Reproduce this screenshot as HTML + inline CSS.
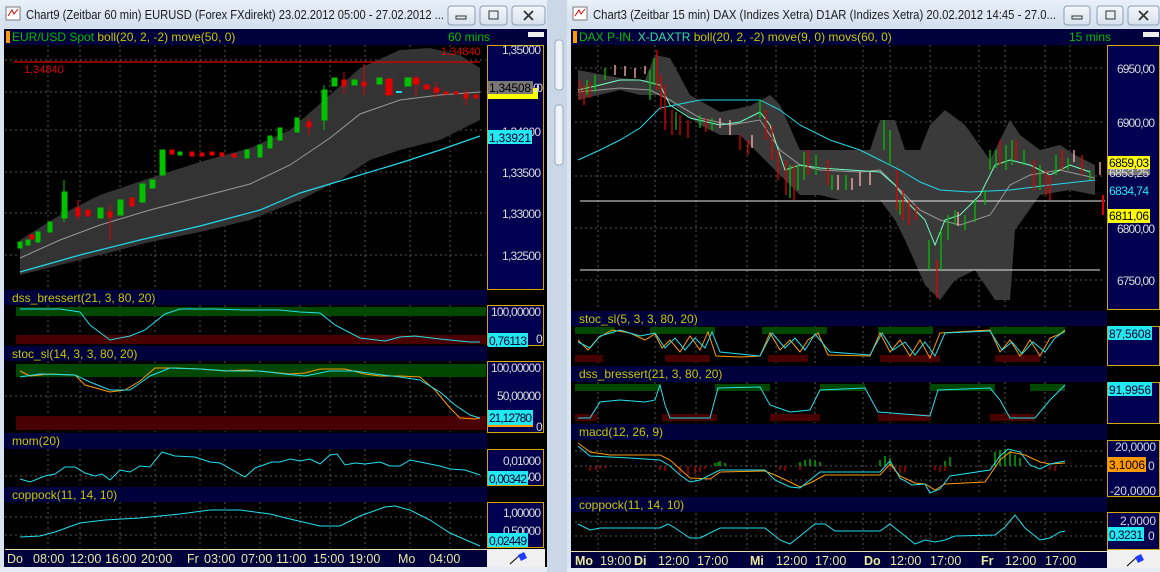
<!DOCTYPE html>
<html><head><meta charset="utf-8"><style>
html,body{margin:0;padding:0;background:#dfe8f2;width:1160px;height:572px;overflow:hidden}
svg{display:block;font-family:"Liberation Sans",sans-serif}
</style></head><body>
<svg width="1160" height="572" viewBox="0 0 1160 572" xmlns="http://www.w3.org/2000/svg">
<defs>
<linearGradient id="tb" x1="0" y1="0" x2="0" y2="1"><stop offset="0" stop-color="#e9f0f8"/><stop offset="1" stop-color="#d2dfee"/></linearGradient>
<linearGradient id="btn" x1="0" y1="0" x2="0" y2="1"><stop offset="0" stop-color="#f4f7fb"/><stop offset="1" stop-color="#d7e1ec"/></linearGradient>
</defs>
<rect x="0" y="0" width="1160" height="572" fill="#d9e4f0"/>
<rect x="547" y="0" width="20" height="572" fill="#c9d7e6"/>
<rect x="555" y="40" width="8" height="50" rx="3" fill="#eef3f8" stroke="#9aa9ba"/>
<rect x="555" y="105" width="8" height="60" rx="3" fill="#eef3f8" stroke="#9aa9ba"/>

<!-- ===== LEFT WINDOW ===== -->
<rect x="0" y="0" width="547" height="28" fill="url(#tb)"/>
<rect x="6" y="7" width="14" height="13" fill="#fff" stroke="#7a7a7a"/><path d="M8 16 L12 10 L14 14 L18 9" stroke="#d00" fill="none"/>
<text x="26" y="19" font-size="12.5" fill="#1c1c1c" textLength="418" lengthAdjust="spacingAndGlyphs">Chart9 (Zeitbar 60 min)  EURUSD (Forex FXdirekt) 23.02.2012 05:00 - 27.02.2012 ...</text>
<rect x="448" y="6" width="27" height="19" rx="3" fill="url(#btn)" stroke="#8c9db2"/><rect x="456" y="16" width="10" height="3" fill="none" stroke="#333"/>
<rect x="480" y="6" width="27" height="19" rx="3" fill="url(#btn)" stroke="#8c9db2"/><rect x="489" y="11" width="9" height="8" fill="none" stroke="#333"/>
<rect x="512" y="6" width="33" height="19" rx="3" fill="url(#btn)" stroke="#8c9db2"/><path d="M524 11 L533 20 M533 11 L524 20" stroke="#333" stroke-width="1.8"/>

<rect x="4" y="29" width="543" height="540" fill="#000"/>
<g fill="#00003c">
<rect x="4" y="29" width="543" height="16"/>
<rect x="4" y="290" width="483" height="15"/>
<rect x="4" y="346" width="483" height="15"/>
<rect x="4" y="433" width="483" height="16"/>
<rect x="4" y="487" width="483" height="15"/>
</g>
<rect x="6" y="31" width="4" height="12" fill="#ff9900"/>
<rect x="528" y="32" width="16" height="5" fill="#eee"/>
<text x="12" y="41" font-size="12" fill="#00c000">EUR/USD Spot <tspan fill="#c8c800">boll(20, 2, -2) move(50, 0)</tspan></text>
<text x="448" y="41" font-size="12" fill="#00c000">60 mins</text>
<g font-size="12" fill="#c8c800">
<text x="12" y="302">dss_bressert(21, 3, 80, 20)</text>
<text x="12" y="358">stoc_sl(14, 3, 3, 80, 20)</text>
<text x="12" y="445">mom(20)</text>
<text x="12" y="499">coppock(11, 14, 10)</text>
</g>
<g fill="#000050" stroke="#d4a800">
<rect x="487.5" y="45.5" width="56" height="244"/>
<rect x="487.5" y="305.5" width="56" height="40"/>
<rect x="487.5" y="361.5" width="56" height="71"/>
<rect x="487.5" y="449.5" width="56" height="36"/>
<rect x="487.5" y="502.5" width="56" height="45"/>
</g>
<g stroke="#555" stroke-dasharray="2,3">
<path d="M5 130H486M5 172H486M5 213H486M5 255H486M5 92H486M5 60H486"/>
<path d="M48 45V289M80 45V289M120 45V289M155 45V289M200 45V289M225 45V289M260 45V289M300 45V289M330 45V289M365 45V289M410 45V289M450 45V289"/>
<path d="M48 305V345M80 305V345M120 305V345M155 305V345M200 305V345M225 305V345M260 305V345M300 305V345M330 305V345M365 305V345M410 305V345M450 305V345"/>
<path d="M48 361V432M80 361V432M120 361V432M155 361V432M200 361V432M225 361V432M260 361V432M300 361V432M330 361V432M365 361V432M410 361V432M450 361V432M5 396H486"/>
<path d="M48 449V485M80 449V485M120 449V485M155 449V485M200 449V485M225 449V485M260 449V485M300 449V485M330 449V485M365 449V485M410 449V485M450 449V485M5 476H486"/>
<path d="M48 502V548M80 502V548M120 502V548M155 502V548M200 502V548M225 502V548M260 502V548M300 502V548M330 502V548M365 502V548M410 502V548M450 502V548M5 517H486M5 535H486"/>
</g>
<polygon fill="#333" points="20,240 60,215 100,195 150,178 200,162 250,148 290,130 330,95 360,68 400,50 430,48 460,55 480,68 480,120 440,140 400,150 370,160 340,180 300,200 250,220 200,232 150,242 100,255 60,265 20,275" />
<polyline fill="none" stroke="#999" points="20,258 60,240 100,225 150,210 200,197 250,184 290,165 330,138 360,114 400,100 440,95 480,92"/>
<polyline fill="none" stroke="#22d8e8" stroke-width="1.2" points="20,272 80,255 140,240 200,226 260,210 300,193 350,178 400,163 440,150 480,136"/>
<path d="M14 62H480" stroke="#e00000" stroke-width="1.3"/>
<text x="24" y="73" font-size="11" fill="#e00000">1,34840</text>
<text x="441" y="55" font-size="11" fill="#e00000">1,34840</text>
<g stroke-width="1">
<g fill="#00c000" stroke="#00c000">
<rect x="18" y="242" width="4" height="6"/><rect x="26" y="240" width="4" height="5"/><rect x="36" y="232" width="4" height="10"/><rect x="48" y="222" width="4" height="10"/>
<rect x="62" y="192" width="5" height="26"/><path d="M64 180V222"/><rect x="98" y="208" width="5" height="10"/><rect x="118" y="200" width="5" height="15"/>
<rect x="140" y="184" width="5" height="18"/><rect x="150" y="180" width="5" height="8"/><rect x="160" y="150" width="5" height="25"/><rect x="178" y="152" width="4" height="3"/>
<rect x="245" y="150" width="4" height="8"/><rect x="258" y="145" width="4" height="12"/><rect x="268" y="136" width="4" height="12"/><rect x="278" y="128" width="4" height="12"/>
<rect x="295" y="118" width="4" height="14"/><rect x="322" y="90" width="5" height="30"/><path d="M324 85V130"/><rect x="332" y="78" width="5" height="8"/><rect x="352" y="80" width="5" height="5"/>
<rect x="377" y="78" width="5" height="6"/><rect x="405" y="78" width="6" height="8"/>
</g>
<g fill="#e00000" stroke="#e00000">
<rect x="30" y="235" width="4" height="4"/><rect x="76" y="208" width="4" height="8"/><path d="M78 200V220"/><rect x="86" y="210" width="4" height="6"/>
<rect x="108" y="212" width="4" height="5"/><path d="M110 205V240"/><rect x="130" y="198" width="4" height="8"/><rect x="170" y="150" width="4" height="4"/>
<rect x="190" y="152" width="4" height="4"/><rect x="200" y="153" width="4" height="3"/><rect x="210" y="152" width="4" height="3"/><rect x="220" y="153" width="4" height="3"/><rect x="232" y="154" width="4" height="3"/>
<rect x="307" y="122" width="4" height="5"/><path d="M309 118V135"/><rect x="342" y="80" width="4" height="6"/><path d="M344 72V94"/>
<rect x="362" y="82" width="4" height="4"/><path d="M364 64V95"/><rect x="386" y="79" width="6" height="16"/><rect x="413" y="78" width="6" height="6"/><path d="M416 76V96"/>
<rect x="424" y="85" width="5" height="4"/><rect x="434" y="88" width="5" height="4"/><path d="M436 82V98"/><rect x="444" y="92" width="4" height="2"/><rect x="454" y="92" width="4" height="2"/>
<rect x="464" y="94" width="4" height="4"/><path d="M466 90V105"/><rect x="474" y="95" width="4" height="3"/>
</g>
<path d="M396 92H402" stroke="#22d8e8" stroke-width="2"/>
</g>
<g font-size="12" fill="#d8d8d8" lengthAdjust="spacingAndGlyphs"><text x="502" y="54" textLength="39">1,35000</text><text x="502" y="136" textLength="39">1,34000</text><text x="502" y="177" textLength="39">1,33500</text><text x="502" y="218" textLength="39">1,33000</text><text x="502" y="260" textLength="39">1,32500</text></g>
<rect x="488" y="88" width="50" height="11" fill="#ffff00"/>
<rect x="488" y="81" width="45" height="13" fill="#777"/><text x="489" y="92" font-size="12" fill="#000" textLength="42">1,34508</text><text x="533" y="92" font-size="12" fill="#ddd" textLength="10">00</text>
<rect x="488" y="130" width="44" height="14" fill="#22e8f0"/><text x="489" y="142" font-size="12" fill="#003" textLength="42">1,33921</text>
<!-- dss -->
<rect x="16" y="307" width="470" height="9" fill="#004800"/><rect x="16" y="335" width="470" height="9" fill="#480000"/>
<polyline fill="none" stroke="#22e0ee" points="20,309 60,309 80,312 90,325 110,340 130,336 145,330 165,314 180,309 215,309 245,310 280,310 300,312 320,313 335,325 360,338 385,341 400,337 415,336 440,339 470,342 480,342"/>
<g font-size="12" fill="#d8d8d8"><text x="491" y="316" textLength="50">100,00000</text><text x="536" y="343">0</text></g>
<rect x="488" y="333" width="40" height="14" fill="#22e8f0"/><text x="489" y="345" font-size="12" fill="#003" textLength="38">0,76113</text>
<!-- stoc -->
<rect x="16" y="364" width="470" height="13" fill="#004800"/><rect x="16" y="416" width="470" height="14" fill="#480000"/>
<polyline fill="none" stroke="#ff9900" points="20,371 30,376 50,374 75,375 85,385 110,392 125,390 140,381 155,368 175,368 200,369 225,371 245,370 270,372 290,374 305,373 320,369 345,369 365,374 380,376 400,376 420,377 435,390 450,408 460,418 475,419 480,418"/>
<polyline fill="none" stroke="#22e0ee" points="20,377 40,374 75,375 90,382 110,390 130,390 150,376 170,368 200,369 230,371 260,371 285,374 305,376 330,371 355,371 375,374 400,377 420,380 440,392 455,405 470,415 480,418"/>
<g font-size="12" fill="#d8d8d8"><text x="491" y="372" textLength="50">100,00000</text><text x="497" y="400" textLength="44">50,00000</text><text x="536" y="431">0</text></g>
<rect x="488" y="410" width="45" height="15" fill="#22e8f0"/><text x="489" y="422" font-size="12" fill="#003" textLength="43">21,12780</text>
<rect x="488" y="425" width="45" height="2" fill="#ff9900"/>
<!-- mom -->
<polyline fill="none" stroke="#22e0ee" points="20,479 30,482 45,476 55,474 65,467 75,467 85,473 95,476 102,474 110,480 120,470 130,472 140,466 150,467 162,452 175,456 195,457 210,462 220,463 245,477 255,468 272,462 280,462 290,459 300,461 310,459 320,464 330,455 337,454 345,465 355,463 365,464 380,462 390,466 400,466 410,460 425,463 440,466 450,469 465,470 480,475"/>
<g font-size="12" fill="#d8d8d8"><text x="503" y="465" textLength="38">0,01000</text><text x="503" y="481" textLength="38">0,00500</text></g>
<rect x="488" y="471" width="40" height="14" fill="#22e8f0"/><text x="489" y="483" font-size="12" fill="#003" textLength="38">0,00342</text>
<!-- coppock -->
<polyline fill="none" stroke="#22e0ee" points="20,537 40,536 55,532 80,523 105,520 140,518 180,514 210,510 240,510 270,514 290,519 320,526 340,526 360,516 385,507 395,506 410,510 430,520 450,533 480,546"/>
<g font-size="12" fill="#d8d8d8"><text x="503" y="517" textLength="38">1,00000</text><text x="503" y="535" textLength="38">0,50000</text></g>
<rect x="488" y="533" width="40" height="14" fill="#22e8f0"/><text x="489" y="545" font-size="12" fill="#003" textLength="38">0,02449</text>
<!-- time axis -->
<rect x="5" y="549" width="482" height="18" fill="#00003c"/><path d="M5 549.5H487" stroke="#e8e0a0"/>
<rect x="487" y="549" width="58" height="18" fill="#f0f0f0"/>
<path d="M510 564 L520 555" stroke="#000"/><path d="M518 555 L524 552 L527 558 L521 561 Z" fill="#1e3cff"/>
<g font-size="12.5" fill="#e8e8a0"><text x="7" y="563">Do</text><text x="33" y="563">08:00</text><text x="70" y="563">12:00</text><text x="105" y="563">16:00</text><text x="141" y="563">20:00</text><text x="187" y="563">Fr</text><text x="204" y="563">03:00</text><text x="241" y="563">07:00</text><text x="276" y="563">11:00</text><text x="313" y="563">15:00</text><text x="349" y="563">19:00</text><text x="398" y="563">Mo</text><text x="429" y="563">04:00</text></g>
<rect x="0" y="567" width="547" height="5" fill="#e5ecf4"/>

<!-- ===== RIGHT WINDOW ===== -->
<rect x="567" y="0" width="593" height="28" fill="url(#tb)"/>
<rect x="573" y="7" width="14" height="13" fill="#fff" stroke="#7a7a7a"/><path d="M575 16 L579 10 L581 14 L585 9" stroke="#d00" fill="none"/>
<text x="593" y="19" font-size="12.5" fill="#1c1c1c" textLength="463" lengthAdjust="spacingAndGlyphs">Chart3 (Zeitbar 15 min)  DAX (Indizes Xetra) D1AR (Indizes Xetra) 20.02.2012 14:45 - 27.0...</text>
<rect x="1064" y="6" width="26" height="19" rx="3" fill="url(#btn)" stroke="#8c9db2"/><rect x="1072" y="16" width="10" height="3" fill="none" stroke="#333"/>
<rect x="1097" y="6" width="26" height="19" rx="3" fill="url(#btn)" stroke="#8c9db2"/><rect x="1106" y="11" width="9" height="8" fill="none" stroke="#333"/>
<rect x="1128" y="6" width="31" height="19" rx="3" fill="url(#btn)" stroke="#8c9db2"/><path d="M1139 11 L1148 20 M1148 11 L1139 20" stroke="#333" stroke-width="1.8"/>

<rect x="571" y="29" width="589" height="540" fill="#000"/>
<g fill="#00003c">
<rect x="571" y="29" width="589" height="16"/>
<rect x="571" y="311" width="536" height="15"/>
<rect x="571" y="366" width="536" height="16"/>
<rect x="571" y="424" width="536" height="16"/>
<rect x="571" y="497" width="536" height="15"/>
</g>
<rect x="573" y="31" width="4" height="12" fill="#ff9900"/>
<rect x="1143" y="32" width="16" height="5" fill="#eee"/>
<text x="579" y="41" font-size="12" fill="#00c000">DAX P-IN. <tspan fill="#30e0a0">X-DAXTR</tspan> <tspan fill="#c8c800">boll(20, 2, -2) move(9, 0) movs(60, 0)</tspan></text>
<text x="1069" y="41" font-size="12" fill="#00c000">15 mins</text>
<g font-size="12" fill="#c8c800">
<text x="579" y="323">stoc_sl(5, 3, 3, 80, 20)</text>
<text x="579" y="378">dss_bressert(21, 3, 80, 20)</text>
<text x="579" y="436">macd(12, 26, 9)</text>
<text x="579" y="509">coppock(11, 14, 10)</text>
</g>
<g fill="#000050" stroke="#d4a800">
<rect x="1107.5" y="45.5" width="52" height="264"/>
<rect x="1107.5" y="326.5" width="52" height="39"/>
<rect x="1107.5" y="382.5" width="52" height="41"/>
<rect x="1107.5" y="440.5" width="52" height="56"/>
<rect x="1107.5" y="512.5" width="52" height="37"/>
</g>
<g stroke="#555" stroke-dasharray="2,3">
<path d="M575 68H1105M575 122H1105M575 176H1105M575 228H1105M575 280H1105"/>
<path d="M598 45V310M655 45V310M696 45V310M747 45V310M776 45V310M815 45V310M863 45V310M890 45V310M930 45V310M979 45V310M1005 45V310M1045 45V310M1070 45V310"/>
<path d="M598 326V365M655 326V365M696 326V365M747 326V365M776 326V365M815 326V365M863 326V365M890 326V365M930 326V365M979 326V365M1005 326V365M1045 326V365"/>
<path d="M598 382V423M655 382V423M696 382V423M747 382V423M776 382V423M815 382V423M863 382V423M890 382V423M930 382V423M979 382V423M1005 382V423M1045 382V423"/>
<path d="M598 440V495M655 440V495M696 440V495M747 440V495M776 440V495M815 440V495M863 440V495M890 440V495M930 440V495M979 440V495M1005 440V495M1045 440V495M575 451H1105M575 466H1105M575 480H1105"/>
<path d="M598 513V549M655 513V549M696 513V549M747 513V549M776 513V549M815 513V549M863 513V549M890 513V549M930 513V549M979 513V549M1005 513V549M1045 513V549M575 522H1105M575 536H1105"/>
</g>
<polygon fill="#3a3a3a" points="578,70 620,78 645,80 655,55 670,58 690,95 720,112 750,106 770,95 780,105 800,150 820,150 845,150 870,150 880,120 895,120 905,150 920,150 930,125 945,110 965,125 990,160 1000,140 1010,120 1020,135 1040,150 1060,145 1075,155 1095,165 1095,195 1070,190 1040,195 1015,230 1010,300 995,300 975,270 955,280 940,300 925,285 905,240 895,220 880,200 860,200 840,200 820,195 800,195 780,175 760,155 740,135 720,135 700,125 680,110 660,95 640,95 620,90 578,100"/>
<polyline fill="none" stroke="#999" points="578,92 620,88 650,90 670,100 700,118 730,125 760,120 780,150 800,165 820,170 860,172 880,170 900,190 920,210 940,220 960,225 990,215 1010,185 1030,175 1060,170 1095,178"/>
<polyline fill="none" stroke="#22d8e8" points="578,160 600,150 620,140 640,128 660,108 700,100 760,100 780,110 800,125 830,140 860,150 880,160 900,170 920,182 940,190 970,192 1010,190 1050,185 1095,180"/>
<polyline fill="none" stroke="#70ffc0" points="578,90 600,85 620,80 640,80 660,85 670,105 690,118 720,125 740,122 760,112 770,125 785,170 800,165 820,168 850,170 880,172 895,185 910,205 925,220 935,245 945,220 960,215 980,195 995,165 1010,160 1030,165 1050,175 1070,165 1090,172"/>
<path d="M580 201H1105M580 270H1100" stroke="#e8e8e8"/>
<g stroke-width="1.3">
<path stroke="#e00000" d="M580 80V100M584 85V105M590 82V98M657 50V90M661 75V110M665 85V130M672 110V135M680 115V135M688 120V138M706 118V132M740 135V150M748 140V155M766 110V140M772 125V160M778 150V180M786 160V195M794 165V200M808 150V175M828 160V185M897 170V210M903 190V220M909 200V225M916 205V220M937 260V298M1000 140V165M1016 140V160M1034 160V190M1046 170V195M1050 175V200M1062 150V170M1082 155V175"/>
<path stroke="#00c000" d="M587 80V95M595 75V92M605 68V80M650 70V100M654 58V85M676 112V130M700 115V128M712 118V130M760 100V118M790 165V198M798 165V190M804 152V180M816 155V175M832 175V190M846 175V190M884 120V150M890 130V165M900 200V215M929 240V270M941 230V270M948 215V240M955 210V225M965 215V230M975 200V222M985 190V205M990 150V170M996 150V168M1006 145V170M1012 140V165M1024 150V165M1040 165V190M1056 155V175M1068 158V170M1090 170V180"/>
<path stroke="#ffb0b0" d="M615 65V75M625 66V76M635 68V78M645 66V74M720 118V128M730 120V135M752 135V148M838 175V190M852 178V190M860 172V186M870 172V185M958 212V226M1074 150V162M1100 162V175"/>
</g>
<g font-size="12" fill="#d8d8d8"><text x="1117" y="73" textLength="38">6950,00</text><text x="1117" y="127" textLength="38">6900,00</text><text x="1117" y="233" textLength="38">6800,00</text><text x="1117" y="285" textLength="38">6750,00</text></g>
<rect x="1108" y="163" width="42" height="12" fill="#777"/><rect x="1108" y="156" width="42" height="13" fill="#ffff00"/><text x="1109" y="167" font-size="12" fill="#000" textLength="40">6859,03</text><text x="1109" y="177" font-size="12" fill="#ddd" textLength="40">6853,25</text>
<rect x="1108" y="184" width="42" height="14" fill="#000050"/><text x="1109" y="195" font-size="12" fill="#22e8f0" textLength="40">6834,74</text>
<rect x="1108" y="209" width="42" height="14" fill="#ffff00"/><text x="1109" y="220" font-size="12" fill="#000" textLength="40">6811,06</text>
<path d="M1103 195V215" stroke="#e00000" stroke-width="2"/>
<g fill="#004800"><rect x="575" y="327" width="40" height="7"/><rect x="650" y="327" width="65" height="7"/><rect x="762" y="327" width="65" height="7"/><rect x="878" y="327" width="55" height="7"/><rect x="990" y="327" width="75" height="7"/></g>
<g fill="#480000"><rect x="575" y="355" width="28" height="7"/><rect x="665" y="355" width="45" height="7"/><rect x="768" y="355" width="40" height="7"/><rect x="880" y="355" width="60" height="7"/><rect x="995" y="355" width="45" height="7"/></g>
<polyline fill="none" stroke="#ff9900" points="578,340 588,350 598,338 612,330 630,333 645,340 655,334 662,348 670,340 680,352 690,336 700,350 708,332 716,356 740,357 760,356 770,333 780,350 790,340 800,352 808,340 818,333 828,355 870,356 880,333 890,352 900,340 910,356 920,340 930,358 940,333 990,330 1000,352 1010,340 1020,356 1030,340 1040,356 1050,338 1060,334 1065,330"/>
<polyline fill="none" stroke="#22e0ee" points="578,342 590,348 600,336 620,330 640,336 655,333 665,348 675,338 685,350 695,338 705,348 712,332 720,352 760,356 772,333 785,348 795,338 805,350 815,334 830,352 870,355 882,333 893,350 905,342 915,355 925,342 935,356 945,333 990,331 1002,350 1012,342 1022,354 1033,342 1045,352 1055,338 1065,331"/>
<rect x="1108" y="326" width="44" height="14" fill="#22e8f0"/><text x="1109" y="338" font-size="12" fill="#003" textLength="42">87,5608</text>
<g fill="#004800"><rect x="575" y="384" width="85" height="7"/><rect x="715" y="384" width="55" height="7"/><rect x="820" y="384" width="45" height="7"/><rect x="930" y="384" width="65" height="7"/><rect x="1030" y="384" width="35" height="7"/></g>
<g fill="#480000"><rect x="575" y="414" width="22" height="7"/><rect x="662" y="414" width="55" height="7"/><rect x="770" y="414" width="50" height="7"/><rect x="878" y="414" width="52" height="7"/><rect x="990" y="414" width="45" height="7"/></g>
<polyline fill="none" stroke="#22e0ee" points="578,418 590,418 600,402 620,400 645,402 655,400 660,385 665,405 670,418 710,418 718,388 760,387 770,405 790,412 810,410 820,390 865,388 878,412 930,416 938,390 990,388 1000,400 1010,418 1035,418 1050,400 1065,385"/>
<rect x="1108" y="382" width="44" height="14" fill="#22e8f0"/><text x="1109" y="394" font-size="12" fill="#003" textLength="42">91,9956</text>
<path stroke="#a00" stroke-width="1.5" d="M590 466V471M596 466V470M600 466V469M605 466V468M660 466V470M665 466V471M680 466V474M688 466V475M695 466V474M700 466V472M705 466V469M780 466V470M785 466V471M800 466V470M890 466V470M895 466V472M900 466V473M905 466V472M935 466V470M940 466V472M945 466V471M1050 466V470M1055 466V471"/>
<path stroke="#0a0" stroke-width="1.5" d="M715 466V463M718 466V462M720 466V461M725 466V463M800 466V462M805 466V460M810 466V459M815 466V460M820 466V462M880 466V460M885 466V456M890 466V458M945 466V461M950 466V457M995 466V452M1000 466V450M1005 466V449M1010 466V451M1015 466V455M1020 466V458"/>
<polyline fill="none" stroke="#ff9900" points="578,443 590,452 610,455 660,455 670,460 690,478 710,479 720,472 765,471 775,475 790,482 800,487 810,483 825,475 880,475 890,464 900,476 915,483 925,484 935,490 945,484 985,482 1000,460 1010,452 1025,455 1040,462 1050,464 1065,463"/>
<polyline fill="none" stroke="#22e0ee" points="578,446 590,456 630,458 660,460 670,466 680,475 690,482 700,480 720,470 765,470 775,480 790,487 800,488 810,480 820,472 880,472 890,461 900,478 912,485 925,484 930,493 940,489 950,476 990,470 1000,456 1008,449 1020,452 1030,465 1040,469 1050,464 1065,461"/>
<g font-size="12" fill="#d8d8d8"><text x="1115" y="451" textLength="41">20,0000</text><text x="1148" y="470">0</text><text x="1110" y="495" textLength="46">-20,0000</text></g>
<rect x="1108" y="457" width="38" height="15" fill="#ff9900"/><text x="1109" y="469" font-size="12" fill="#000" textLength="36">3,1006</text>
<polyline fill="none" stroke="#22e0ee" points="578,524 590,530 600,528 660,528 668,524 675,528 690,538 700,538 720,528 765,528 780,540 790,544 800,536 815,524 825,524 835,531 880,531 890,524 900,532 915,544 925,540 935,542 945,540 955,536 995,535 1005,527 1015,515 1025,528 1040,540 1050,538 1060,532 1065,531"/>
<g font-size="12" fill="#d8d8d8"><text x="1120" y="525" textLength="36">2,0000</text><text x="1148" y="540">0</text></g>
<rect x="1108" y="527" width="36" height="14" fill="#22e8f0"/><text x="1109" y="539" font-size="12" fill="#003" textLength="34">0,3231</text>
<rect x="571" y="551" width="536" height="17" fill="#00003c"/><path d="M571 551.5H1107" stroke="#e8e0a0"/>
<rect x="1107" y="550" width="53" height="18" fill="#f0f0f0"/>
<path d="M1127 566 L1137 557" stroke="#000"/><path d="M1135 557 L1141 554 L1144 560 L1138 563 Z" fill="#1e3cff"/>
<g font-size="12.5" fill="#e8e8a0"><text x="575" y="565" font-weight="bold">Mo</text><text x="600" y="565">19:00</text><text x="634" y="565" font-weight="bold">Di</text><text x="658" y="565">12:00</text><text x="697" y="565">17:00</text><text x="750" y="565" font-weight="bold">Mi</text><text x="776" y="565">12:00</text><text x="815" y="565">17:00</text><text x="864" y="565" font-weight="bold">Do</text><text x="890" y="565">12:00</text><text x="930" y="565">17:00</text><text x="981" y="565" font-weight="bold">Fr</text><text x="1005" y="565">12:00</text><text x="1045" y="565">17:00</text></g>
<rect x="567" y="568" width="593" height="4" fill="#e5ecf4"/>
</svg>
</body></html>
